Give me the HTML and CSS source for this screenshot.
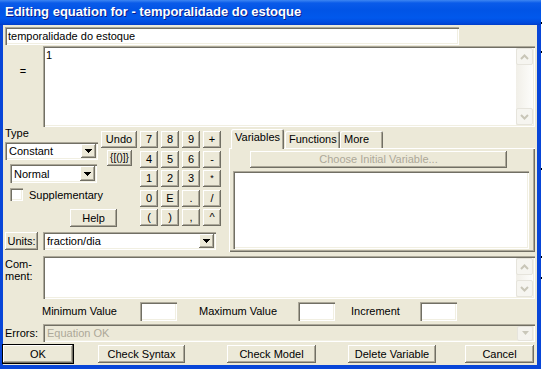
FILE: index.html
```html
<!DOCTYPE html>
<html lang="en">

<head>
    <meta charset="UTF-8">
    <title>Editing equation</title>
    <link rel="stylesheet" href="styles.css">
</head>

<body>
    <div class="window">
        <div class="titlebar">Editing equation for - temporalidade do estoque</div>
        <div class="client">
            <div class="field name-field">temporalidade do estoque</div>

            <div class="eq-row">
                <div class="eq-label">=</div>
                <div class="field textbox eq-box">
                    <div class="textbox-text">1</div>
                    <div class="vscroll">
                        <span class="sb-btn"><svg width="9" height="6" viewBox="0 0 9 6"><polyline points="1,5 4.5,1.5 8,5" fill="none" stroke="#c9c6b8" stroke-width="2"/></svg></span>
                        <span class="sb-btn"><svg width="9" height="6" viewBox="0 0 9 6"><polyline points="1,1 4.5,4.5 8,1" fill="none" stroke="#c9c6b8" stroke-width="2"/></svg></span>
                    </div>
                </div>
            </div>

            <div class="middle">
                <div class="left-block">
                    <div class="tools">
                        <div class="type-col">
                            <div class="type-label">Type</div>
                            <div class="field combo type-combo">
                                <span class="combo-text">Constant</span>
                                <span class="drop-btn"><svg width="7" height="4" viewBox="0 0 7 4"><path d="M0 0h7v1H6v1H5v1H4v1H3V3H2V2H1V1H0z"/></svg></span>
                            </div>
                            <div class="field combo normal-combo">
                                <span class="combo-text">Normal</span>
                                <span class="drop-btn"><svg width="7" height="4" viewBox="0 0 7 4"><path d="M0 0h7v1H6v1H5v1H4v1H3V3H2V2H1V1H0z"/></svg></span>
                            </div>
                            <div class="check"><span class="field check-box"></span><span>Supplementary</span></div>
                            <button class="btn help-btn">Help</button>
                        </div>
                        <div class="undo-col">
                            <button class="btn undo-btn">Undo</button>
                            <button class="btn brace-btn">{[()]}</button>
                        </div>
                        <div class="keypad">
                            <button class="btn">7</button>
                            <button class="btn">8</button>
                            <button class="btn">9</button>
                            <button class="btn">+</button>
                            <button class="btn">4</button>
                            <button class="btn">5</button>
                            <button class="btn">6</button>
                            <button class="btn">-</button>
                            <button class="btn">1</button>
                            <button class="btn">2</button>
                            <button class="btn">3</button>
                            <button class="btn small-key">*</button>
                            <button class="btn">0</button>
                            <button class="btn">E</button>
                            <button class="btn">.</button>
                            <button class="btn">/</button>
                            <button class="btn">(</button>
                            <button class="btn">)</button>
                            <button class="btn">,</button>
                            <button class="btn">^</button>
                        </div>
                    </div>
                    <div class="units-row">
                        <button class="btn units-btn">Units:</button>
                        <div class="field combo units-combo">
                            <span class="combo-text">fraction/dia</span>
                            <span class="drop-btn"><svg width="7" height="4" viewBox="0 0 7 4"><path d="M0 0h7v1H6v1H5v1H4v1H3V3H2V2H1V1H0z"/></svg></span>
                        </div>
                    </div>
                </div>

                <div class="tab-block">
                    <div class="tab-strip">
                        <div class="tab active">Variables</div>
                        <div class="tab tab-functions">Functions</div>
                        <div class="tab tab-more">More</div>
                    </div>
                    <div class="tab-panel">
                        <button class="btn choose-btn" disabled>Choose Initial Variable...</button>
                        <div class="field listbox"></div>
                    </div>
                </div>
            </div>

            <div class="comment-row">
                <div class="side-label comment-label">Com-<br>ment:</div>
                <div class="field textbox comment-box">
                    <div class="textbox-text"></div>
                    <div class="vscroll">
                        <span class="sb-btn"><svg width="9" height="6" viewBox="0 0 9 6"><polyline points="1,5 4.5,1.5 8,5" fill="none" stroke="#c9c6b8" stroke-width="2"/></svg></span>
                        <span class="sb-btn"><svg width="9" height="6" viewBox="0 0 9 6"><polyline points="1,1 4.5,4.5 8,1" fill="none" stroke="#c9c6b8" stroke-width="2"/></svg></span>
                    </div>
                </div>
            </div>

            <div class="range-row">
                <span class="range-label min-label">Minimum Value</span>
                <div class="field small-input"></div>
                <span class="range-label max-label">Maximum Value</span>
                <div class="field small-input"></div>
                <span class="range-label inc-label">Increment</span>
                <div class="field small-input"></div>
            </div>

            <div class="errors-row">
                <div class="side-label errors-label">Errors:</div>
                <div class="field combo errors-combo">
                    <span class="combo-text">Equation OK</span>
                    <span class="xp-drop"><svg width="7" height="4" viewBox="0 0 7 4"><path d="M0 0h7L3.5 4z" fill="#c9c7ba"/></svg></span>
                </div>
            </div>

            <div class="buttons-row">
                <button class="btn ok-btn">OK</button>
                <button class="btn syntax-btn">Check Syntax</button>
                <button class="btn model-btn">Check Model</button>
                <button class="btn delete-btn">Delete Variable</button>
                <button class="btn cancel-btn">Cancel</button>
            </div>
        </div>
    </div>
    <div class="edge"></div>
</body>

</html>
```

FILE: styles.css
```css
* {
    box-sizing: border-box;
}

body {
    margin: 0;
    display: flex;
    background: #fff;
    font-family: "Liberation Sans", Arial, sans-serif;
    font-size: 11px;
    color: #000;
}

.window {
    width: 541px;
    height: 369px;
    display: flex;
    flex-direction: column;
}

.titlebar {
    height: 25px;
    padding: 4px 0 0 5px;
    background: linear-gradient(#3d86f2 0, #0a5be9 3px, #0154e6 10px, #0158ec 18px, #0049dc 23px, #003cc8 25px);
    color: #fff;
    font-weight: bold;
    font-size: 13px;
    line-height: 16px;
    text-shadow: 1px 1px #0a1b8a;
    white-space: nowrap;
}

.client {
    flex: 1;
    display: flex;
    flex-direction: column;
    background: #ece9d8;
    border: solid #0846d8;
    border-width: 0 4px 4px 3px;
}

.edge {
    width: 1px;
    height: 372px;
    background: linear-gradient(#fff 0 22px, #000 22px 24px, #fff 24px 51px, #000 51px 53px, #fff 53px 168px, #000 168px 170px, #fff 170px 256px, #000 256px 258px, #fff 258px 277px, #000 277px 279px, #fff 279px);
}

/* classic 3d controls */
.field {
    background: #fff;
    box-shadow: inset 1px 1px #aca899, inset 2px 2px #716f64, inset -1px -1px #fff, inset -2px -2px #f1efe2;
}

.btn {
    font: inherit;
    color: #000;
    background: #ece9d8;
    border: none;
    padding: 0;
    line-height: 1;
    box-shadow: inset -1px -1px #716f64, inset 1px 1px #fff, inset -2px -2px #aca899;
}

.name-field {
    width: 454px;
    height: 18px;
    margin: 2px 0 0 2px;
    padding-left: 3px;
    line-height: 18px;
}

.eq-row {
    display: flex;
    height: 81px;
    margin-top: 1px;
}

.eq-label {
    width: 40px;
    padding-top: 19px;
    text-align: center;
    line-height: 13px;
}

.textbox {
    display: flex;
    width: 492px;
    padding: 2px;
}

.textbox-text {
    flex: 1;
    padding: 1px 0 0 1px;
    line-height: 13px;
}

.vscroll {
    width: 17px;
    display: flex;
    flex-direction: column;
    justify-content: space-between;
    background: linear-gradient(to right, #f1efe8, #fdfdfb);
}

.sb-btn {
    height: 17px;
    display: flex;
    align-items: center;
    justify-content: center;
    border: 1px solid #e6e4dc;
    border-radius: 2px;
    background: #f6f5f0;
}

/* type / keypad area */
.middle {
    display: flex;
    height: 126px;
}

.left-block {
    width: 226px;
    display: flex;
    flex-direction: column;
}

.tools {
    display: flex;
    height: 105px;
}

.type-col {
    width: 95px;
    padding-left: 2px;
    display: flex;
    flex-direction: column;
    align-items: flex-start;
}

.type-label {
    height: 15px;
    line-height: 13px;
}

.combo {
    display: flex;
    align-items: center;
    height: 18px;
    padding: 2px;
}

.combo-text {
    flex: 1;
    padding-left: 2px;
    white-space: nowrap;
}

.drop-btn {
    width: 15px;
    height: 100%;
    display: flex;
    align-items: center;
    justify-content: center;
    background: #ece9d8;
    box-shadow: inset -1px -1px #716f64, inset 1px 1px #fff, inset -2px -2px #aca899;
}

.type-combo {
    width: 93px;
}

.normal-combo {
    width: 87px;
    height: 19px;
    margin: 4px 0 0 5px;
}

.check {
    display: flex;
    align-items: center;
    gap: 6px;
    height: 13px;
    margin: 5px 0 0 5px;
}

.check-box {
    width: 13px;
    height: 13px;
}

.help-btn {
    width: 47px;
    height: 18px;
    margin: 8px 0 0 65px;
}

.undo-col {
    width: 36px;
    margin-left: 3px;
    padding-top: 4px;
    display: flex;
    flex-direction: column;
    align-items: flex-start;
}

.undo-btn {
    width: 36px;
    height: 17px;
}

.brace-btn {
    width: 25px;
    height: 16px;
    margin: 2px 0 0 6px;
    font-size: 10px;
}

.keypad {
    margin-left: 3px;
    padding-top: 4px;
    display: grid;
    grid-template-columns: repeat(4, 18px);
    grid-template-rows: repeat(5, 17px);
    column-gap: 3px;
    row-gap: 2.5px;
    align-content: start;
}

.small-key {
    font-size: 9px;
}

.units-row {
    display: flex;
    height: 18px;
    padding-left: 2px;
}

.units-btn {
    width: 33px;
}

.units-combo {
    width: 173px;
    margin-left: 5px;
}

/* tabs */
.tab-block {
    width: 306px;
    display: flex;
    flex-direction: column;
}

.tab-strip {
    display: flex;
    align-items: flex-end;
    height: 21px;
    padding-left: 2px;
}

.tab {
    height: 17px;
    padding-left: 4px;
    line-height: 17px;
    background: #ece9d8;
    border-radius: 2px 2px 0 0;
    box-shadow: inset 1px 1px #fff, inset -1px 0 #716f64, inset -2px 0 #aca899;
}

.tab.active {
    position: relative;
    z-index: 1;
    width: 53px;
    height: 20px;
    margin-bottom: -1px;
    line-height: 16px;
}

.tab-functions {
    width: 55px;
    margin-left: 1px;
}

.tab-more {
    width: 43px;
}

.tab-panel {
    height: 104px;
    padding-top: 3px;
    display: flex;
    flex-direction: column;
    box-shadow: inset 1px 1px #fff, inset -1px -1px #716f64, inset -2px -2px #aca899;
}

.choose-btn {
    width: 257px;
    height: 17px;
    margin-left: 21px;
    color: #aca899;
}

.listbox {
    width: 296px;
    height: 78px;
    margin: 3px 0 0 4px;
}

/* lower rows */
.comment-row {
    display: flex;
    height: 43px;
    margin-top: 3px;
}

.side-label {
    width: 40px;
    padding-left: 2px;
}

.comment-label {
    padding-top: 2px;
    line-height: 12px;
}

.comment-box {
    width: 492px;
}

.range-row {
    display: flex;
    height: 19px;
    margin-top: 3px;
    line-height: 19px;
}

.min-label {
    width: 98px;
    margin-left: 39px;
}

.max-label {
    width: 99px;
    margin-left: 22px;
}

.inc-label {
    width: 69px;
    margin-left: 16px;
}

.small-input {
    width: 37px;
    height: 19px;
}

.errors-row {
    display: flex;
    height: 18px;
    margin-top: 3px;
    line-height: 18px;
}

.errors-combo {
    width: 492px;
    background: #ece9d8;
    color: #aca899;
}

.xp-drop {
    width: 16px;
    height: 15px;
    display: flex;
    align-items: center;
    justify-content: center;
    border: 1px solid #e6e4dc;
    border-radius: 2px;
    background: #f4f3ee;
}

.buttons-row {
    display: flex;
    height: 18px;
    margin-top: 3px;
}

.ok-btn {
    width: 70px;
    outline: 1px solid #000;
}

.syntax-btn {
    width: 87px;
    margin-left: 25px;
}

.model-btn {
    width: 89px;
    margin-left: 42px;
}

.delete-btn {
    width: 88px;
    margin-left: 32px;
}

.cancel-btn {
    width: 69px;
    margin-left: 29px;
}
```
